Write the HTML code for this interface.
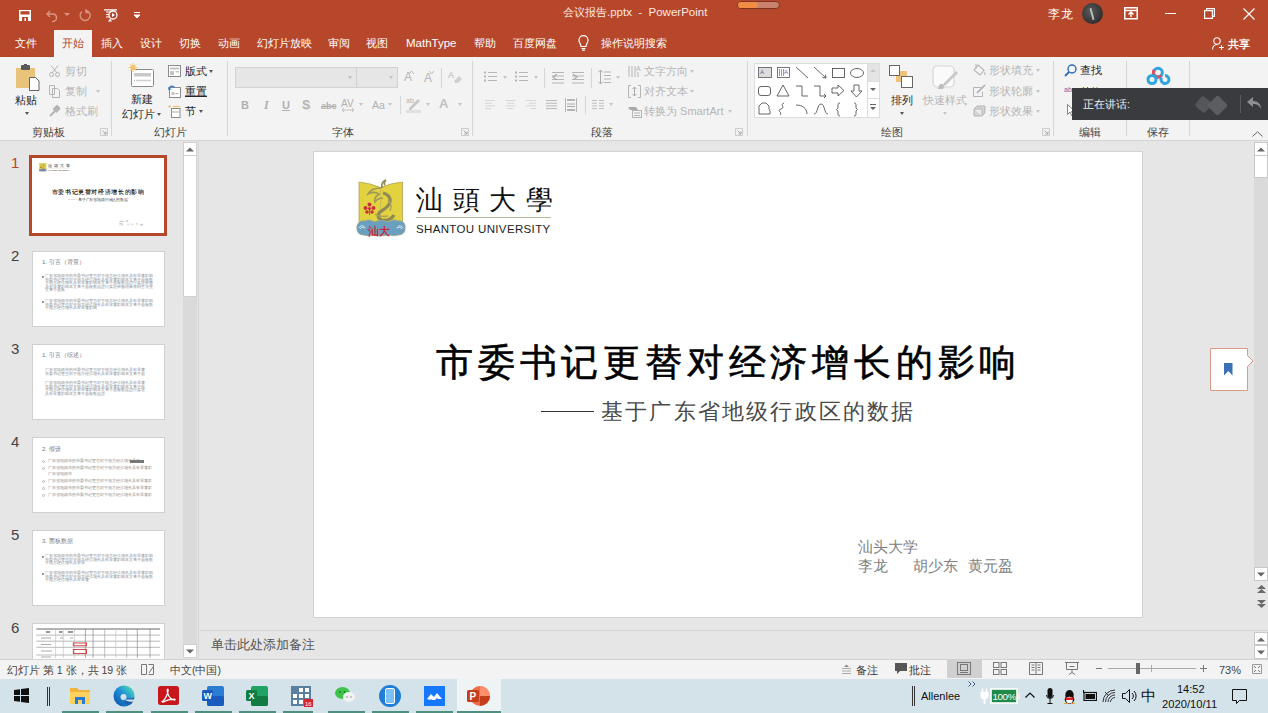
<!DOCTYPE html>
<html><head><meta charset="utf-8">
<style>
*{box-sizing:border-box;margin:0;padding:0}
html,body{width:1268px;height:713px;overflow:hidden;background:#e6e6e6;font-family:"Liberation Sans",sans-serif;}
.a{position:absolute;white-space:nowrap}
#title{left:0;top:0;width:1268px;height:30px;background:#b7472a}
#tabs{left:0;top:30px;width:1268px;height:27px;background:#b7472a}
#ribbon{left:0;top:57px;width:1268px;height:84px;background:#f3f3f3;border-bottom:1px solid #d5d5d5}
#left{left:0;top:141px;width:199px;height:518px;background:#e6e6e6;border-right:1px solid #d4d4d4}
#main{left:200px;top:141px;width:1068px;height:518px;background:#e6e6e6}
#slide{left:313px;top:151px;width:830px;height:467px;background:#fff;border:1px solid #d2d2d2}
#notes{left:200px;top:630px;width:1068px;height:29px;background:#e6e6e6;border-top:1px solid #d2d2d2}
#status{left:0;top:659px;width:1268px;height:20px;background:#f3f3f3;border-top:1px solid #d2d2d2}
#taskbar{left:0;top:679px;width:1268px;height:34px;background:#d4e2ea}
.w{color:#fff}
.tab{top:5px;font-size:10.5px;color:#fff;line-height:16px}
.thumb{position:absolute;background:#fff;border:1px solid #d0d0d0}
.num{position:absolute;font-size:15px;color:#444}
</style></head><body>
<div id="title" class="a">
 <svg class="a" style="left:19px;top:10px" width="12" height="11" viewBox="0 0 12 11"><path d="M0 0h12v11H0z" fill="#fff"/><path d="M1.5 1.2h9v3.3h-9z" fill="#b7472a"/><path d="M3 7h6v4H3z" fill="#b7472a"/><path d="M5.5 8h1.5v3H5.5z" fill="#fff"/></svg>
 <svg class="a" style="left:46px;top:9px" width="14" height="13" viewBox="0 0 14 13"><path d="M4 2 L1 5 L4 8 M1.5 5 H8 A4 4 0 0 1 8 12.5 H6" fill="none" stroke="#d99582" stroke-width="1.4"/></svg>
 <svg class="a" style="left:64px;top:13px" width="6" height="4"><path d="M0 0h6l-3 3z" fill="#d99582"/></svg>
 <svg class="a" style="left:79px;top:9px" width="12" height="13" viewBox="0 0 12 13"><path d="M7 1.5 A5 5 0 1 1 3 2.5 M7 0 V3.5 H10.5" fill="none" stroke="#d99582" stroke-width="1.4"/></svg>
 <svg class="a" style="left:104px;top:9px" width="15" height="13" viewBox="0 0 15 13"><path d="M0 0.8h13 M2 3h5 M2 5.5h3 M2 8h4" stroke="#fff" stroke-width="1.2"/><circle cx="9" cy="6" r="4" fill="none" stroke="#fff" stroke-width="1.3"/><path d="M8 4l3 2-3 2z" fill="#fff"/><path d="M4 12.5l2-3 2 3" fill="#fff"/></svg>
 <svg class="a" style="left:134px;top:12px" width="6" height="7"><path d="M0 0.5h6 M0 3h6l-3 3z" stroke="#fff" fill="#fff" stroke-width="1"/></svg>
 <div class="a w" style="left:563px;top:6px;font-size:11.5px;color:#fbe9e4"><span style="font-size:10.5px">会议报告</span>.pptx&nbsp; - &nbsp;PowerPoint</div>
 <div class="a" style="left:737px;top:1px;width:43px;height:8px;border-radius:4px;background:#c9806c;border:1.5px solid #7e3420"><div style="width:20px;height:100%;background:#f08c44;border-radius:3px"></div></div>
 <div class="a w" style="left:1048px;top:6px;font-size:12px;letter-spacing:1px">李龙</div>
 <div class="a" style="left:1082px;top:3px;width:21px;height:21px;border-radius:50%;background:radial-gradient(circle at 40% 40%,#5a5a5a,#1e1e1e)"><div style="position:absolute;left:9px;top:5px;width:2px;height:12px;background:#bbb;transform:rotate(-15deg)"></div></div>
 <svg class="a" style="left:1124px;top:7px" width="14" height="13" viewBox="0 0 14 13"><rect x="0.75" y="0.75" width="12.5" height="11" fill="none" stroke="#fff" stroke-width="1.5"/><path d="M0.5 3.5h13" stroke="#fff" stroke-width="1.5"/><path d="M7 10V5 M4.5 7.5L7 5l2.5 2.5" stroke="#fff" stroke-width="1.4" fill="none"/></svg>
 <div class="a" style="left:1165px;top:13px;width:11px;height:1.2px;background:#fff"></div>
 <svg class="a" style="left:1204px;top:8px" width="11" height="11" viewBox="0 0 11 11"><path d="M0.6 2.6h7.8v7.8h-7.8z M2.6 2.6V0.6h7.8v7.8H8.4" fill="none" stroke="#fff" stroke-width="1.2"/></svg>
 <svg class="a" style="left:1243px;top:8px" width="12" height="12" viewBox="0 0 12 12"><path d="M0.5 0.5L11.5 11.5 M11.5 0.5L0.5 11.5" stroke="#fff" stroke-width="1.2"/></svg>
</div>
<div id="tabs" class="a">
 <div class="a" style="left:54px;top:0;width:38px;height:28px;background:#f3f3f3"></div>
 <div class="a tab" style="left:15px">文件</div>
 <div class="a tab" style="left:62px;color:#b7472a">开始</div>
 <div class="a tab" style="left:101px">插入</div>
 <div class="a tab" style="left:140px">设计</div>
 <div class="a tab" style="left:179px">切换</div>
 <div class="a tab" style="left:218px">动画</div>
 <div class="a tab" style="left:257px">幻灯片放映</div>
 <div class="a tab" style="left:328px">审阅</div>
 <div class="a tab" style="left:366px">视图</div>
 <div class="a tab" style="left:406px;font-size:11.5px">MathType</div>
 <div class="a tab" style="left:474px">帮助</div>
 <div class="a tab" style="left:513px">百度网盘</div>
 <svg class="a" style="left:578px;top:5px" width="11" height="16" viewBox="0 0 11 16"><path d="M3 11.5 C3 9 1 8 1 5.2 A4.5 4.5 0 0 1 10 5.2 C10 8 8 9 8 11.5z M3.5 13.5h4 M4 15.2h3" fill="none" stroke="#fff" stroke-width="1.2"/></svg>
 <div class="a tab" style="left:601px">操作说明搜索</div>
 <svg class="a" style="left:1212px;top:7px" width="12" height="13" viewBox="0 0 12 13"><circle cx="5" cy="4" r="3.2" fill="none" stroke="#fff" stroke-width="1.1"/><path d="M0.5 12.5C0.5 9.5 2.5 7.5 5 7.5 M7 10.5h5 M9.5 8v5" fill="none" stroke="#fff" stroke-width="1.1"/></svg>
 <div class="a tab" style="left:1228px;top:6px;font-weight:bold">共享</div>
</div>
<div id="ribbon" class="a"></div>
<div id="ribc"><svg class="a" style="left:15px;top:64px" width="26" height="27" viewBox="0 0 26 27"><rect x="1" y="4" width="19" height="20" fill="#eac37a"/><rect x="6" y="1" width="9" height="5" rx="1" fill="#5a5a5a"/><rect x="9" y="0" width="3" height="2" fill="#5a5a5a"/><path d="M14.5 13.5h6l3.5 3.5v9.5h-9.5z" fill="#fff" stroke="#666" stroke-width="1"/></svg>
<div class="a" style="left:15px;top:93px;font-size:11px;line-height:14px;color:#262626;">粘贴</div>
<div class="a" style="left:25px;top:112px;width:0;height:0;border-left:2.5px solid transparent;border-right:2.5px solid transparent;border-top:3px solid #555"></div>
<svg class="a" style="left:49px;top:65px" width="11" height="12" viewBox="0 0 11 12"><path d="M2 0.5L8 8 M9 0.5L3 8" stroke="#b5b5b5" stroke-width="1"/><circle cx="2.5" cy="9.5" r="2" fill="none" stroke="#b5b5b5"/><circle cx="8.5" cy="9.5" r="2" fill="none" stroke="#b5b5b5"/></svg>
<div class="a" style="left:65px;top:64px;font-size:11px;line-height:14px;color:#b5b5b5;">剪切</div>
<svg class="a" style="left:49px;top:85px" width="11" height="13" viewBox="0 0 11 13"><path d="M0.5 0.5h5v9h-5z M3.5 3.5h5l2 2v7h-7z" fill="#f3f3f3" stroke="#b5b5b5" stroke-width="1"/></svg>
<div class="a" style="left:65px;top:84px;font-size:11px;line-height:14px;color:#b5b5b5;">复制</div>
<div class="a" style="left:96px;top:90px;width:0;height:0;border-left:2.5px solid transparent;border-right:2.5px solid transparent;border-top:3px solid #c5c5c5"></div>
<svg class="a" style="left:49px;top:105px" width="11" height="12" viewBox="0 0 11 12"><path d="M1 11L6 6 M5 4l3-3 2.5 2.5-3 3z" stroke="#b5b5b5" stroke-width="2" fill="#b5b5b5"/></svg>
<div class="a" style="left:65px;top:104px;font-size:11px;line-height:14px;color:#b5b5b5;">格式刷</div>
<div class="a" style="left:32px;top:125px;font-size:11px;line-height:14px;color:#444;">剪贴板</div>
<svg class="a" style="left:100px;top:128px" width="8" height="8" viewBox="0 0 8 8"><path d="M0.5 7.5V0.5H7.5V7.5z" fill="none" stroke="#c2c2c2" stroke-width="0.8"/><path d="M2.5 2.5L6 6 M6 3.5V6H3.5" fill="none" stroke="#a0a0a0" stroke-width="0.9"/></svg>
<div class="a" style="left:111px;top:61px;width:1px;height:75px;background:#d6d6d6"></div>
<svg class="a" style="left:128px;top:63px" width="27" height="24" viewBox="0 0 27 24"><rect x="3.5" y="6.5" width="22" height="17" rx="1" fill="#fff" stroke="#8a8a8a" stroke-width="1"/><rect x="6" y="10" width="17" height="3.5" fill="#c8c8c8"/><path d="M8 17.5h15" stroke="#cfcfcf" stroke-width="1.5"/><path d="M6 17.5h1" stroke="#aaa"/><circle cx="5" cy="4.5" r="2.5" fill="#f5c46a"/><path d="M5 0v9 M0.5 4.5h9 M1.8 1.3l6.4 6.4 M8.2 1.3l-6.4 6.4" stroke="#f5c46a" stroke-width="1"/></svg>
<div class="a" style="left:131px;top:92px;font-size:11px;line-height:14px;color:#262626;">新建</div>
<div class="a" style="left:122px;top:107px;font-size:11px;line-height:14px;color:#262626;">幻灯片</div>
<div class="a" style="left:157px;top:113px;width:0;height:0;border-left:2.5px solid transparent;border-right:2.5px solid transparent;border-top:3px solid #555"></div>
<svg class="a" style="left:168px;top:65px" width="13" height="12" viewBox="0 0 13 12"><rect x="0.5" y="0.5" width="12" height="11" fill="#fff" stroke="#8a8a8a" stroke-width="1"/><rect x="2" y="2.5" width="9" height="2" fill="#c4c4c4"/><rect x="2" y="6" width="4" height="4" fill="#c4c4c4"/><rect x="7.5" y="6" width="3.5" height="1.5" fill="#c4c4c4"/></svg>
<div class="a" style="left:185px;top:64px;font-size:11px;line-height:14px;color:#262626;">版式</div>
<div class="a" style="left:209px;top:70px;width:0;height:0;border-left:2.5px solid transparent;border-right:2.5px solid transparent;border-top:3px solid #555"></div>
<svg class="a" style="left:168px;top:85px" width="13" height="13" viewBox="0 0 13 13"><rect x="1.5" y="2.5" width="11" height="10" fill="#fff" stroke="#8a8a8a" stroke-width="1"/><rect x="3.5" y="7" width="3" height="3" fill="#c4c4c4"/><path d="M7.5 8.5h3" stroke="#aaa"/><path d="M0.8 4.5A3.2 3.2 0 0 1 6.5 2.5" fill="none" stroke="#3d7fc1" stroke-width="1.3"/><path d="M0 2.2l0.9 3.3 2.8-1.4z" fill="#3d7fc1"/></svg>
<div class="a" style="left:185px;top:84px;font-size:11px;line-height:14px;color:#262626;text-decoration:underline">重置</div>
<svg class="a" style="left:168px;top:105px" width="13" height="13" viewBox="0 0 13 13"><rect x="3.5" y="3.5" width="8.5" height="9" fill="#fff" stroke="#8a8a8a" stroke-width="1"/><path d="M3.5 7h8.5" stroke="#c4c4c4" stroke-width="1.5"/><path d="M0 1.5h3 M1.5 0v3" stroke="#f5c46a" stroke-width="1"/><path d="M5 1.5h7" stroke="#f5c46a" stroke-width="1.2"/></svg>
<div class="a" style="left:185px;top:104px;font-size:11px;line-height:14px;color:#262626;">节</div>
<div class="a" style="left:199px;top:110px;width:0;height:0;border-left:2.5px solid transparent;border-right:2.5px solid transparent;border-top:3px solid #555"></div>
<div class="a" style="left:154px;top:125px;font-size:11px;line-height:14px;color:#444;">幻灯片</div>
<div class="a" style="left:227px;top:61px;width:1px;height:75px;background:#d6d6d6"></div>
<div class="a" style="left:235px;top:67px;width:122px;height:21px;background:#e6e6e6;border:1px solid #d2d2d2"></div>
<div class="a" style="left:356px;top:67px;width:42px;height:21px;background:#e6e6e6;border:1px solid #d2d2d2"></div>
<div class="a" style="left:348px;top:76px;width:0;height:0;border-left:2.5px solid transparent;border-right:2.5px solid transparent;border-top:3px solid #c0c0c0"></div>
<div class="a" style="left:389px;top:76px;width:0;height:0;border-left:2.5px solid transparent;border-right:2.5px solid transparent;border-top:3px solid #c0c0c0"></div>
<div class="a" style="left:404px;top:70px;font-size:12px;line-height:14px;color:#b5b5b5;">A</div>
<svg class="a" style="left:409px;top:71px" width="5" height="3"><path d="M0 3L2.5 0 5 3" fill="none" stroke="#b5b5b5"/></svg>
<div class="a" style="left:424px;top:71px;font-size:12px;line-height:14px;color:#b5b5b5;">A</div>
<svg class="a" style="left:429px;top:71px" width="5" height="3"><path d="M0 0L2.5 3 5 0" fill="none" stroke="#b5b5b5"/></svg>
<div class="a" style="left:441px;top:68px;width:1px;height:20px;background:#d6d6d6"></div>
<svg class="a" style="left:448px;top:70px" width="14" height="14" viewBox="0 0 14 14"><text x="0" y="8" font-size="9" fill="#b5b5b5" font-family="Liberation Sans">A</text><path d="M6 11l5-5 3 3-4 4H7z" fill="#d0d0d0"/></svg>
<div class="a" style="left:241px;top:98px;font-size:11px;line-height:14px;color:#b0b0b0;font-weight:bold">B</div>
<div class="a" style="left:264px;top:98px;font-size:12px;line-height:14px;color:#b0b0b0;font-style:italic;font-weight:bold;font-family:Liberation Serif;">I</div>
<div class="a" style="left:282px;top:98px;font-size:11px;line-height:14px;color:#b0b0b0;font-weight:bold;text-decoration:underline">U</div>
<div class="a" style="left:302px;top:98px;font-size:12px;line-height:14px;color:#b5b5b5;font-weight:bold;text-shadow:1px 1px #ddd">S</div>
<div class="a" style="left:321px;top:99px;line-height:14px;color:#b0b0b0;text-decoration:line-through;font-size:9px;font-weight:bold">abc</div>
<div class="a" style="left:341px;top:97px;line-height:14px;color:#b0b0b0;font-size:10px">AV</div>
<div class="a" style="left:372px;top:98px;font-size:10.5px;line-height:14px;color:#b0b0b0;">Aa</div>
<svg class="a" style="left:342px;top:108px" width="12" height="4"><path d="M0 2h12 M0 2l2-2 M0 2l2 2 M12 2l-2-2 M12 2l-2 2" stroke="#b5b5b5" stroke-width="0.8"/></svg>
<div class="a" style="left:359px;top:103px;width:0;height:0;border-left:2.5px solid transparent;border-right:2.5px solid transparent;border-top:3px solid #c5c5c5"></div>
<div class="a" style="left:388px;top:103px;width:0;height:0;border-left:2.5px solid transparent;border-right:2.5px solid transparent;border-top:3px solid #c5c5c5"></div>
<div class="a" style="left:400px;top:96px;width:1px;height:18px;background:#d6d6d6"></div>
<svg class="a" style="left:406px;top:96px" width="15" height="17" viewBox="0 0 15 17"><text x="0" y="7" font-size="7" fill="#b5b5b5" font-family="Liberation Sans">ab</text><path d="M3 12L12 3l2 2-9 9H3z" fill="#c8c8c8"/><rect x="0" y="14" width="15" height="3" fill="#e0e0e0"/></svg>
<div class="a" style="left:426px;top:103px;width:0;height:0;border-left:2.5px solid transparent;border-right:2.5px solid transparent;border-top:3px solid #c5c5c5"></div>
<div class="a" style="left:439px;top:97px;font-size:13px;line-height:14px;color:#c0c0c0;font-weight:bold">A</div>
<div class="a" style="left:458px;top:103px;width:0;height:0;border-left:2.5px solid transparent;border-right:2.5px solid transparent;border-top:3px solid #c5c5c5"></div>
<div class="a" style="left:332px;top:125px;font-size:11px;line-height:14px;color:#444;">字体</div>
<svg class="a" style="left:461px;top:128px" width="8" height="8" viewBox="0 0 8 8"><path d="M0.5 7.5V0.5H7.5V7.5z" fill="none" stroke="#c2c2c2" stroke-width="0.8"/><path d="M2.5 2.5L6 6 M6 3.5V6H3.5" fill="none" stroke="#a0a0a0" stroke-width="0.9"/></svg>
<div class="a" style="left:472px;top:61px;width:1px;height:75px;background:#d6d6d6"></div>
<svg class="a" style="left:484px;top:71px" width="13" height="12"><rect x="0" y="0.5" width="2" height="2" fill="#b5b5b5"/><rect x="4" y="1" width="9" height="1" fill="#b5b5b5"/><rect x="0" y="4.5" width="2" height="2" fill="#b5b5b5"/><rect x="4" y="5" width="9" height="1" fill="#b5b5b5"/><rect x="0" y="8.5" width="2" height="2" fill="#b5b5b5"/><rect x="4" y="9" width="9" height="1" fill="#b5b5b5"/></svg>
<div class="a" style="left:503px;top:76px;width:0;height:0;border-left:2.5px solid transparent;border-right:2.5px solid transparent;border-top:3px solid #c5c5c5"></div>
<svg class="a" style="left:515px;top:71px" width="13" height="12"><rect x="0" y="0.5" width="2" height="2" fill="#b5b5b5"/><rect x="4" y="1" width="9" height="1" fill="#b5b5b5"/><rect x="0" y="4.5" width="2" height="2" fill="#b5b5b5"/><rect x="4" y="5" width="9" height="1" fill="#b5b5b5"/><rect x="0" y="8.5" width="2" height="2" fill="#b5b5b5"/><rect x="4" y="9" width="9" height="1" fill="#b5b5b5"/></svg>
<div class="a" style="left:534px;top:76px;width:0;height:0;border-left:2.5px solid transparent;border-right:2.5px solid transparent;border-top:3px solid #c5c5c5"></div>
<div class="a" style="left:544px;top:68px;width:1px;height:20px;background:#d6d6d6"></div>
<svg class="a" style="left:552px;top:71px" width="12" height="14.0"><rect x="0" y="1.0" width="12" height="1" fill="#b5b5b5"/><rect x="0" y="4.5" width="12" height="1" fill="#b5b5b5"/><rect x="0" y="8.0" width="12" height="1" fill="#b5b5b5"/><rect x="0" y="11.5" width="12" height="1" fill="#b5b5b5"/></svg>
<svg class="a" style="left:552px;top:74px" width="6" height="6"><path d="M5 0L1 3l4 3" fill="none" stroke="#aaa" stroke-width="1.2"/></svg>
<svg class="a" style="left:572px;top:71px" width="12" height="14.0"><rect x="0" y="1.0" width="12" height="1" fill="#b5b5b5"/><rect x="0" y="4.5" width="12" height="1" fill="#b5b5b5"/><rect x="0" y="8.0" width="12" height="1" fill="#b5b5b5"/><rect x="0" y="11.5" width="12" height="1" fill="#b5b5b5"/></svg>
<svg class="a" style="left:572px;top:74px" width="6" height="6"><path d="M1 0l4 3-4 3" fill="none" stroke="#aaa" stroke-width="1.2"/></svg>
<div class="a" style="left:591px;top:68px;width:1px;height:20px;background:#d6d6d6"></div>
<svg class="a" style="left:598px;top:70px" width="13" height="14" viewBox="0 0 13 14"><path d="M2.5 0v14 M0 2.5l2.5-2.5 2.5 2.5 M0 11.5l2.5 2.5 2.5-2.5" fill="none" stroke="#aaa" stroke-width="1"/><path d="M6 2h7 M6 5.5h7 M6 9h7 M6 12.5h7" stroke="#b5b5b5"/></svg>
<div class="a" style="left:616px;top:76px;width:0;height:0;border-left:2.5px solid transparent;border-right:2.5px solid transparent;border-top:3px solid #c5c5c5"></div>
<svg class="a" style="left:485px;top:100px" width="11" height="10"><path d="M0 0.5h10 M0 3.2h7 M0 5.9h10 M0 8.600000000000001h6 " stroke="#d6d6d6" stroke-width="1"/></svg>
<svg class="a" style="left:505px;top:100px" width="11" height="10"><path d="M0.5 0.5h10 M2.0 3.2h7 M0.5 5.9h10 M2.5 8.600000000000001h6 " stroke="#d6d6d6" stroke-width="1"/></svg>
<svg class="a" style="left:525px;top:100px" width="11" height="10"><path d="M1 0.5h10 M4 3.2h7 M1 5.9h10 M5 8.600000000000001h6 " stroke="#d6d6d6" stroke-width="1"/></svg>
<svg class="a" style="left:546px;top:100px" width="11" height="10"><path d="M0 0.5h11 M0 3.2h11 M0 5.9h11 M0 8.6h11" stroke="#b8b8b8" stroke-width="1"/></svg>
<svg class="a" style="left:565px;top:98px" width="12" height="14" viewBox="0 0 12 14"><path d="M0.5 0v14 M11.5 0v14" stroke="#b5b5b5"/><path d="M2 2h8 M2 12h8" stroke="#b5b5b5" stroke-width="2"/><path d="M2 6h8 M2 8.5h8" stroke="#aaa"/></svg>
<div class="a" style="left:585px;top:96px;width:1px;height:18px;background:#d6d6d6"></div>
<svg class="a" style="left:592px;top:100px" width="12" height="10"><path d="M0 0.5h5 M0 3.2h5 M0 5.9h5 M0 8.6h5 M7 0.5h5 M7 3.2h5 M7 5.9h5 M7 8.6h5" stroke="#c0c0c0" stroke-width="1"/></svg>
<div class="a" style="left:609px;top:103px;width:0;height:0;border-left:2.5px solid transparent;border-right:2.5px solid transparent;border-top:3px solid #c5c5c5"></div>
<svg class="a" style="left:628px;top:64px" width="13" height="14" viewBox="0 0 13 14"><path d="M1 2v11 M4 2v11 M7 2v11" stroke="#b5b5b5"/><text x="8" y="7" font-size="7" fill="#b5b5b5" font-family="Liberation Sans">A</text><path d="M10 8v5" stroke="#b5b5b5"/></svg>
<div class="a" style="left:644px;top:64px;font-size:11px;line-height:14px;color:#b5b5b5;">文字方向</div>
<div class="a" style="left:690px;top:70px;width:0;height:0;border-left:2.5px solid transparent;border-right:2.5px solid transparent;border-top:3px solid #c5c5c5"></div>
<svg class="a" style="left:628px;top:85px" width="13" height="13" viewBox="0 0 13 13"><path d="M3 0.5H0.5v12H3 M10 0.5h2.5v12H10" fill="none" stroke="#b5b5b5"/><path d="M6.5 2v9 M4.5 4l2-2 2 2 M4.5 9l2 2 2-2" fill="none" stroke="#aaa"/></svg>
<div class="a" style="left:644px;top:84px;font-size:11px;line-height:14px;color:#b5b5b5;">对齐文本</div>
<div class="a" style="left:690px;top:90px;width:0;height:0;border-left:2.5px solid transparent;border-right:2.5px solid transparent;border-top:3px solid #c5c5c5"></div>
<svg class="a" style="left:628px;top:105px" width="14" height="13" viewBox="0 0 14 13"><path d="M0 2h8l2 3H2z" fill="#aaa"/><rect x="4.5" y="5.5" width="9" height="7" fill="#f3f3f3" stroke="#b5b5b5"/><path d="M6 8h6 M6 10.5h6" stroke="#b5b5b5"/></svg>
<div class="a" style="left:644px;top:104px;font-size:11px;line-height:14px;color:#b5b5b5;">转换为 SmartArt</div>
<div class="a" style="left:728px;top:110px;width:0;height:0;border-left:2.5px solid transparent;border-right:2.5px solid transparent;border-top:3px solid #c5c5c5"></div>
<div class="a" style="left:591px;top:125px;font-size:11px;line-height:14px;color:#444;">段落</div>
<svg class="a" style="left:735px;top:128px" width="8" height="8" viewBox="0 0 8 8"><path d="M0.5 7.5V0.5H7.5V7.5z" fill="none" stroke="#c2c2c2" stroke-width="0.8"/><path d="M2.5 2.5L6 6 M6 3.5V6H3.5" fill="none" stroke="#a0a0a0" stroke-width="0.9"/></svg>
<div class="a" style="left:747px;top:61px;width:1px;height:75px;background:#d6d6d6"></div>
<div class="a" style="left:754px;top:63px;width:126px;height:55px;background:#fff;border:1px solid #dcdcdc"></div>
<div class="a" style="left:867px;top:64px;width:12px;height:17px;background:#e4e4e4;border-left:1px solid #dcdcdc"></div>
<div class="a" style="left:867px;top:81px;width:12px;height:36px;border-left:1px solid #dcdcdc;border-top:1px solid #dcdcdc"></div>
<div class="a" style="left:867px;top:98px;width:12px;height:1px;background:#dcdcdc"></div>
<svg class="a" style="left:870px;top:69px" width="6" height="3"><path d="M0 3L3 0 6 3z" fill="#c8c8c8"/></svg>
<svg class="a" style="left:870px;top:88px" width="6" height="4"><path d="M0 0h6L3 3z" fill="#666"/></svg>
<svg class="a" style="left:870px;top:104px" width="6" height="7"><path d="M0 0.5h6" stroke="#666"/><path d="M0 3h6L3 6z" fill="#666"/></svg>
<svg class="a" style="left:756px;top:64px" width="110" height="54" viewBox="0 0 110 54">
<rect x="2.5" y="3.5" width="13" height="10" fill="#ddd" stroke="#555" stroke-width="0.8"/><text x="4" y="10" font-size="6" fill="#3c6fb0" font-family="Liberation Sans">A</text>
<rect x="21.5" y="3.5" width="12" height="10" fill="none" stroke="#555" stroke-width="0.8"/><path d="M23.5 5v7 M25.5 5v7 M27.5 5v7" stroke="#555" stroke-width="0.6"/><text x="28" y="10" font-size="6" fill="#3c6fb0" font-family="Liberation Sans">A</text>
<path d="M40 3l12 11" stroke="#555" stroke-width="0.9"/>
<path d="M58 3l12 11 M70 14l-3.5-0.5 M70 14l-0.5-3.5" stroke="#555" stroke-width="0.9" fill="none"/>
<rect x="76.5" y="4.5" width="12" height="9" fill="none" stroke="#555" stroke-width="0.9"/>
<ellipse cx="101" cy="9" rx="6.5" ry="4.5" fill="none" stroke="#555" stroke-width="0.9"/>
<rect x="2.5" y="22.5" width="12" height="9" rx="2.5" fill="none" stroke="#555" stroke-width="0.9"/>
<path d="M27 21l-6 11h12z" fill="none" stroke="#555" stroke-width="0.9"/>
<path d="M40 22h6v10h6" fill="none" stroke="#555" stroke-width="0.9"/>
<path d="M58 22h6v10h6 M68 30l2 2-2 2" fill="none" stroke="#555" stroke-width="0.9"/>
<path d="M76 24h6v-3l6 5.5-6 5.5v-3h-6z" fill="none" stroke="#555" stroke-width="0.9"/>
<path d="M98 21h5v6h3l-5.5 6-5.5-6h3z" fill="none" stroke="#555" stroke-width="0.9"/>
<path d="M3 50h11c1-4-2-4-1-8l-3-3H6l-3 3z" fill="none" stroke="#555" stroke-width="0.9"/>
<path d="M28 39c-5 2 2 4-3 6s2 3-1 6" fill="none" stroke="#555" stroke-width="0.9"/>
<path d="M40 41c6 0 11 3 11 9" fill="none" stroke="#555" stroke-width="0.9"/>
<path d="M58 50c4 0 3-10 7-10s3 10 7 10" fill="none" stroke="#555" stroke-width="0.9"/>
<path d="M84 39c-2 0-2 1-2 3v2l-1.5 1.5 1.5 1.5v2c0 2 0 3 2 3" fill="none" stroke="#555" stroke-width="0.9"/>
<path d="M98 39c2 0 2 1 2 3v2l1.5 1.5-1.5 1.5v2c0 2 0 3-2 3" fill="none" stroke="#555" stroke-width="0.9"/>
</svg>
<svg class="a" style="left:889px;top:65px" width="24" height="23" viewBox="0 0 24 23"><rect x="7" y="6" width="11" height="11" fill="#efc27a"/><rect x="0.5" y="0.5" width="10" height="10" fill="#fff" stroke="#666"/><rect x="12.5" y="11.5" width="11" height="11" fill="#fff" stroke="#666"/></svg>
<div class="a" style="left:891px;top:93px;font-size:11px;line-height:14px;color:#262626;">排列</div>
<div class="a" style="left:900px;top:112px;width:0;height:0;border-left:2.5px solid transparent;border-right:2.5px solid transparent;border-top:3px solid #555"></div>
<svg class="a" style="left:932px;top:65px" width="27" height="25" viewBox="0 0 27 25"><rect x="1" y="1" width="21" height="21" rx="4" fill="#fafafa" stroke="#d6d6d6" stroke-width="1.2"/><path d="M26 8L13 21l-2-2L24 6z" fill="#c8c8c8"/><path d="M9 19c3 0 4 2 2 5H5c3-1 1-5 4-5z" fill="#bdbdbd"/></svg>
<div class="a" style="left:923px;top:93px;font-size:11px;line-height:14px;color:#b5b5b5;">快速样式</div>
<div class="a" style="left:943px;top:112px;width:0;height:0;border-left:2.5px solid transparent;border-right:2.5px solid transparent;border-top:3px solid #c5c5c5"></div>
<svg class="a" style="left:973px;top:64px" width="13" height="12" viewBox="0 0 13 12"><path d="M5 1l6 5-4 5-6-5z" fill="none" stroke="#b5b5b5" stroke-width="1.1"/><path d="M3 0v5" stroke="#b5b5b5"/><path d="M11 8c1 1 1.5 2 0.5 3" stroke="#ccc" stroke-width="1.5"/></svg>
<div class="a" style="left:989px;top:63px;font-size:11px;line-height:14px;color:#b5b5b5;">形状填充</div>
<div class="a" style="left:1036px;top:69px;width:0;height:0;border-left:2.5px solid transparent;border-right:2.5px solid transparent;border-top:3px solid #c5c5c5"></div>
<svg class="a" style="left:973px;top:84px" width="13" height="13" viewBox="0 0 13 13"><path d="M0.5 3.5h8 M0.5 3.5v9h9v-5" fill="none" stroke="#b5b5b5"/><path d="M4 9l8-8" stroke="#aaa" stroke-width="1.4"/></svg>
<div class="a" style="left:989px;top:84px;font-size:11px;line-height:14px;color:#b5b5b5;">形状轮廓</div>
<div class="a" style="left:1036px;top:90px;width:0;height:0;border-left:2.5px solid transparent;border-right:2.5px solid transparent;border-top:3px solid #c5c5c5"></div>
<svg class="a" style="left:973px;top:105px" width="13" height="12" viewBox="0 0 13 12"><path d="M4 1h8v7l-3 3H1V4z" fill="#d4d4d4" stroke="#b5b5b5"/><path d="M1 4h8v7" fill="#ececec" stroke="#b5b5b5"/></svg>
<div class="a" style="left:989px;top:104px;font-size:11px;line-height:14px;color:#b5b5b5;">形状效果</div>
<div class="a" style="left:1036px;top:110px;width:0;height:0;border-left:2.5px solid transparent;border-right:2.5px solid transparent;border-top:3px solid #c5c5c5"></div>
<div class="a" style="left:881px;top:125px;font-size:11px;line-height:14px;color:#444;">绘图</div>
<svg class="a" style="left:1042px;top:128px" width="8" height="8" viewBox="0 0 8 8"><path d="M0.5 7.5V0.5H7.5V7.5z" fill="none" stroke="#c2c2c2" stroke-width="0.8"/><path d="M2.5 2.5L6 6 M6 3.5V6H3.5" fill="none" stroke="#a0a0a0" stroke-width="0.9"/></svg>
<div class="a" style="left:1053px;top:61px;width:1px;height:75px;background:#d6d6d6"></div>
<svg class="a" style="left:1064px;top:64px" width="13" height="13" viewBox="0 0 13 13"><circle cx="8" cy="5" r="4" fill="none" stroke="#2b6cb8" stroke-width="1.4"/><path d="M5 8L1 12" stroke="#2b6cb8" stroke-width="1.8"/></svg>
<div class="a" style="left:1080px;top:63px;font-size:11px;line-height:14px;color:#262626;">查找</div>
<div class="a" style="left:1064px;top:86px;font-size:7px;line-height:7px;color:#7f5aa2">ab</div>
<div class="a" style="left:1080px;top:85px;font-size:11px;line-height:14px;color:#262626">替换</div>
<svg class="a" style="left:1067px;top:104px" width="8" height="12" viewBox="0 0 8 12"><path d="M0.5 0.5v10l2.5-2.5 2 4 1.5-0.8-2-3.7h3.5z" fill="#fff" stroke="#666" stroke-width="0.8"/></svg>
<div class="a" style="left:1079px;top:125px;font-size:11px;line-height:14px;color:#444;">编辑</div>
<div class="a" style="left:1126px;top:61px;width:1px;height:75px;background:#d6d6d6"></div>
<svg class="a" style="left:1146px;top:66px" width="25" height="20" viewBox="0 0 25 20"><circle cx="12" cy="6.5" r="4.3" fill="none" stroke="#2ea5e0" stroke-width="3"/><path d="M15.5 9.5A4.3 4.3 0 0 1 8.2 4" fill="none" stroke="#e84a5f" stroke-width="3"/><circle cx="6" cy="13.5" r="4" fill="none" stroke="#2ea5e0" stroke-width="3"/><path d="M15.5 11.5A4 4 0 1 0 19 9.5" fill="none" stroke="#2ea5e0" stroke-width="3"/></svg>
<div class="a" style="left:1147px;top:125px;font-size:11px;line-height:14px;color:#444;">保存</div>
<div class="a" style="left:1189px;top:61px;width:1px;height:75px;background:#d6d6d6"></div>
<svg class="a" style="left:1252px;top:131px" width="11" height="6"><path d="M0.5 5.5L5.5 0.8 10.5 5.5" fill="none" stroke="#666" stroke-width="1"/></svg>
<div class="a" style="left:1072px;top:88px;width:196px;height:32px;background:#3a3b3f"></div>
<div class="a" style="left:1083px;top:97px;font-size:10.5px;line-height:14px;color:#f0f0f0;">正在讲话:</div>
<svg class="a" style="left:1193px;top:93px" width="42" height="23" viewBox="0 0 42 23"><rect x="4" y="5" width="13" height="13" rx="2.5" transform="rotate(40 10.5 11.5)" fill="#55565a"/><rect x="17" y="5" width="15" height="15" rx="2.5" transform="rotate(45 24.5 12.5)" fill="#5c5d61"/></svg>
<div class="a" style="left:1240px;top:95px;width:1px;height:18px;background:#5a5b5e"></div>
<svg class="a" style="left:1247px;top:97px" width="14" height="12" viewBox="0 0 14 12"><path d="M6 0L0 5l6 5V7c4 0 6 1 8 5 0-5-3-8-8-8z" fill="#8e8f92"/></svg></div>
<div id="left" class="a"></div>
<div id="main" class="a"></div>
<div class="a" style="left:183px;top:142px;width:14px;height:516px;background:#dadada"></div>
<div class="a" style="left:183px;top:142px;width:14px;height:14px;background:#fff;border:1px solid #d0d0d0"></div>
<svg class="a" style="left:186px;top:147px" width="8" height="5"><path d="M0 4.5L4 0.5 8 4.5z" fill="#666"/></svg>
<div class="a" style="left:183px;top:156px;width:14px;height:141px;background:#fff;border:1px solid #d0d0d0;border-top:none"></div>
<div class="a" style="left:183px;top:644px;width:14px;height:14px;background:#fff;border:1px solid #d0d0d0"></div>
<svg class="a" style="left:186px;top:649px" width="8" height="5"><path d="M0 0.5L4 4.5 8 0.5z" fill="#666"/></svg>
<div class="a" style="left:29px;top:155px;width:138px;height:81px;border:3px solid #b7472a;background:#fff"></div>
<div class="num a" style="left:11px;top:154px;color:#b7472a">1</div>
<div class="thumb" style="left:32px;top:251px;width:133px;height:76px"></div>
<div class="num a" style="left:11px;top:247px">2</div>
<div class="thumb" style="left:32px;top:344px;width:133px;height:76px"></div>
<div class="num a" style="left:11px;top:340px">3</div>
<div class="thumb" style="left:32px;top:437px;width:133px;height:76px"></div>
<div class="num a" style="left:11px;top:433px">4</div>
<div class="thumb" style="left:32px;top:530px;width:133px;height:76px"></div>
<div class="num a" style="left:11px;top:526px">5</div>
<div class="thumb" style="left:32px;top:623px;width:133px;height:76px"></div>
<div class="num a" style="left:11px;top:619px">6</div>
<div class="a" style="left:45px;top:275.0px;font-size:3.7px;line-height:3.6px;color:#8c8c8c;">广东省地级市的市委书记更替对于地方经济增长具有显著影响</div><div class="a" style="left:45px;top:278.6px;font-size:3.7px;line-height:3.6px;color:#8c8c8c;">市委书记更替对于地方经济增长具有显著影响本文基于面板数</div><div class="a" style="left:45px;top:282.2px;font-size:3.7px;line-height:3.6px;color:#8c8c8c;">于地方经济增长具有显著影响本文基于面板数据进行实证检验</div><div class="a" style="left:45px;top:285.8px;font-size:3.7px;line-height:3.6px;color:#8c8c8c;">具有显著影响本文基于面板数据进行实证检验结果表明官员变</div><div class="a" style="left:45px;top:289.4px;font-size:3.7px;line-height:3.6px;color:#8c8c8c;">文基于面板</div>
<div class="a" style="left:42px;top:276px;width:1.5px;height:1.5px;background:#999"></div>
<div class="a" style="left:45px;top:300.0px;font-size:3.7px;line-height:3.6px;color:#8c8c8c;">广东省地级市的市委书记更替对于地方经济增长具有显著影响</div><div class="a" style="left:45px;top:303.6px;font-size:3.7px;line-height:3.6px;color:#8c8c8c;">市委书记更替对于地方经济增长具有显著影响本文基于面板数</div><div class="a" style="left:45px;top:307.2px;font-size:3.7px;line-height:3.6px;color:#8c8c8c;">于地方经济增长具有显著影响</div>
<div class="a" style="left:42px;top:301px;width:1.5px;height:1.5px;background:#999"></div>
<div class="a" style="left:45px;top:369.0px;font-size:3.7px;line-height:3.6px;color:#8c8c8c;">广东省地级市的市委书记更替对于地方经济增长具有显著</div><div class="a" style="left:45px;top:372.6px;font-size:3.7px;line-height:3.6px;color:#8c8c8c;">市委书记更替对于地方经济增长具有显著影响本文基于面</div>
<div class="a" style="left:45px;top:382.0px;font-size:3.7px;line-height:3.6px;color:#8c8c8c;">广东省地级市的市委书记更替对于地方经济增长具有显著</div><div class="a" style="left:45px;top:385.6px;font-size:3.7px;line-height:3.6px;color:#8c8c8c;">市委书记更替对于地方经济增长具有显著影响本文基于面</div><div class="a" style="left:45px;top:389.2px;font-size:3.7px;line-height:3.6px;color:#8c8c8c;">于地方经济增长具有显著影响本文基于面板数据进行实证</div><div class="a" style="left:45px;top:392.8px;font-size:3.7px;line-height:3.6px;color:#8c8c8c;">具有显著影响本文基于面板数据进</div>
<div class="a" style="left:48px;top:460.0px;font-size:3.7px;line-height:3.6px;color:#8c8c8c;">广东省地级市的市委书记更替对于地方经济增长具有</div>
<div class="a" style="left:42px;top:460px;width:3px;height:3px;border:0.6px solid #bbb;border-radius:50%"></div>
<div class="a" style="left:48px;top:467.0px;font-size:3.7px;line-height:3.6px;color:#8c8c8c;">广东省地级市的市委书记更替对于地方经济增长具有显著影</div>
<div class="a" style="left:42px;top:467px;width:3px;height:3px;border:0.6px solid #bbb;border-radius:50%"></div>
<div class="a" style="left:48px;top:473.0px;font-size:3.7px;line-height:3.6px;color:#8c8c8c;">广东省地级市</div>
<div class="a" style="left:48px;top:480.0px;font-size:3.7px;line-height:3.6px;color:#8c8c8c;">广东省地级市的市委书记更替对于地方经济增长具有显著影</div>
<div class="a" style="left:42px;top:480px;width:3px;height:3px;border:0.6px solid #bbb;border-radius:50%"></div>
<div class="a" style="left:48px;top:487.0px;font-size:3.7px;line-height:3.6px;color:#8c8c8c;">广东省地级市的市委书记更替对于地方经济增长具有显著影</div>
<div class="a" style="left:42px;top:487px;width:3px;height:3px;border:0.6px solid #bbb;border-radius:50%"></div>
<div class="a" style="left:48px;top:494.0px;font-size:3.7px;line-height:3.6px;color:#8c8c8c;">广东省地级市的市委书记更替对于地方经济增长具有显著影</div>
<div class="a" style="left:42px;top:494px;width:3px;height:3px;border:0.6px solid #bbb;border-radius:50%"></div>
<div class="a" style="left:130px;top:460px;width:14px;height:3px;background:#777"></div>
<div class="a" style="left:45px;top:555.0px;font-size:3.7px;line-height:3.6px;color:#8c8c8c;">广东省地级市的市委书记更替对于地方经济增长具有显著影响</div><div class="a" style="left:45px;top:558.6px;font-size:3.7px;line-height:3.6px;color:#8c8c8c;">市委书记更替对于地方经济增长具有显著影响本文基于面板数</div><div class="a" style="left:45px;top:562.2px;font-size:3.7px;line-height:3.6px;color:#8c8c8c;">于地方经济增长具有显</div>
<div class="a" style="left:45px;top:572.0px;font-size:3.7px;line-height:3.6px;color:#8c8c8c;">广东省地级市的市委书记更替对于地方经济增长具有显著影响</div><div class="a" style="left:45px;top:575.6px;font-size:3.7px;line-height:3.6px;color:#8c8c8c;">市委书记更替对于地方经济增长具有显著影响本文基于面板数</div><div class="a" style="left:45px;top:579.2px;font-size:3.7px;line-height:3.6px;color:#8c8c8c;">于地方经济增长具有显著</div>
<div class="a" style="left:42px;top:556px;width:1.5px;height:1.5px;background:#999"></div><div class="a" style="left:42px;top:573px;width:1.5px;height:1.5px;background:#999"></div>
<div class="a" style="left:32px;top:158px;width:132px;height:75px;overflow:hidden;background:#fff"><div style="position:absolute;left:0;top:0;width:1268px;height:713px;transform-origin:0 0;transform:scale(0.15904) translate(-313px,-151px)"><svg class="a" style="left:355px;top:179px" width="52" height="62" viewBox="0 0 52 62">
<path d="M4 3 Q15 4 25.5 8.5 Q36 4 47.5 3 L47.5 44 L4 44 Z" fill="#e3d23f" stroke="#a69a45" stroke-width="0.7"/>
<path d="M25.5 8.5 V42" stroke="#c1b454" stroke-width="0.7"/>
<path d="M27 9c-1-4 1-7 4-8-2 2-2 4-1 5" fill="none" stroke="#8f8a55" stroke-width="1.8"/>
<path d="M26 9c-6 0-11 2-13 6 4-2 8-2 11 0-3 2-5 5-4 8 2-3 5-4 8-4" fill="none" stroke="#9d975a" stroke-width="1.6"/>
<path d="M28 14c5 1 8 5 7 9-1 5-6 7-10 10-3 3-2 7 2 8 5 1 10-1 12-5" fill="none" stroke="#8f8a55" stroke-width="3.2"/>
<path d="M33 21c3 3 4 7 2 11 M20 35c3 2 8 3 13 2" fill="none" stroke="#a9a25f" stroke-width="1.4"/>
<g fill="#c8313a"><circle cx="14.5" cy="25.5" r="2"/><circle cx="10.5" cy="29" r="2"/><circle cx="18.5" cy="29" r="2"/><circle cx="12" cy="33" r="1.8"/><circle cx="17" cy="33" r="1.8"/><circle cx="14.5" cy="29.5" r="1.6"/></g>
<path d="M14.5 30v6" stroke="#c8313a" stroke-width="0.8"/>
<path d="M2 50c-1-5 3-9 8-8 3-2 7-1 9 1 4-2 10-2 14 0 3-2 7-3 10-1 5-1 8 3 7 8 0 4-3 6-7 6-3 1-6 1-8 0-5 1-12 1-18 0-2 1-6 1-8 0-4 0-7-2-7-6z" fill="#6b9fc0" stroke="#9fa88c" stroke-width="0.8"/>
<path d="M4 49c1-3 5-3 6 0-2-1-4-1-5 1 M48 49c-1-3-5-3-6 0 2-1 4-1 5 1" fill="none" stroke="#dfe9ee" stroke-width="0.9"/>
<text x="13" y="56" font-size="10.5" font-weight="bold" fill="#c72e3b" font-family="Liberation Serif" letter-spacing="-0.5">汕大</text>
</svg>
<div class="a" style="left:416px;top:182px;font-size:27px;line-height:36px;color:#111;letter-spacing:9.5px;font-family:Liberation Serif,serif">汕頭大學</div>
<div class="a" style="left:416px;top:217px;width:135px;height:1px;background:#b9b99a"></div>
<div class="a" style="left:416px;top:222px;font-size:11.5px;line-height:14px;color:#222;letter-spacing:0.35px">SHANTOU UNIVERSITY</div>
<div class="a" style="left:436px;top:340px;font-size:37px;line-height:46px;color:#000;font-weight:normal;letter-spacing:4.8px;-webkit-text-stroke:0.6px #000;font-family:Liberation Serif,serif">市委书记更替对经济增长的影响</div>
<div class="a" style="left:541px;top:411px;width:53px;height:1.3px;background:#333"></div>
<div class="a" style="left:601px;top:398px;font-size:22px;line-height:28px;color:#4a4a4a;font-weight:normal;letter-spacing:2.2px">基于广东省地级行政区的数据</div>
<div class="a" style="left:858px;top:537px;font-size:15px;line-height:19px;color:#808080">汕头大学</div>
<div class="a" style="left:858px;top:556px;font-size:15px;line-height:19px;color:#808080">李龙</div><div class="a" style="left:913px;top:556px;font-size:15px;line-height:19px;color:#808080">胡少东</div><div class="a" style="left:968px;top:556px;font-size:15px;line-height:19px;color:#808080">黄元盈</div>
</div></div>
<div class="a" style="left:42px;top:259px;font-size:6px;line-height:7px;color:#777">1. 引言（背景）</div>


<div class="a" style="left:42px;top:352px;font-size:6px;line-height:7px;color:#777">1. 引言（综述）</div>
<div class="a" style="left:42px;top:446px;font-size:6px;line-height:7px;color:#777">2. 假设</div>

<div class="a" style="left:42px;top:538px;font-size:6px;line-height:7px;color:#777">3. 面板数据</div>
<svg class="a" style="left:33px;top:624px" width="131" height="34" viewBox="0 0 131 34"><path d="M3.3 5H127" stroke="#555" stroke-width="0.9"/><path d="M3.3 11.1H127" stroke="#8a8a8a" stroke-width="0.6"/><path d="M3.3 17.2H127" stroke="#8a8a8a" stroke-width="0.6"/><path d="M3.3 23.3H127" stroke="#8a8a8a" stroke-width="0.6"/><path d="M3.3 31H127" stroke="#8a8a8a" stroke-width="0.6"/><path d="M22.6 5V34" stroke="#bbb" stroke-width="0.6"/><path d="M30.3 5V34" stroke="#bbb" stroke-width="0.6"/><path d="M41.4 5V34" stroke="#bbb" stroke-width="0.6"/><path d="M52.4 5V34" stroke="#777" stroke-width="0.6"/><path d="M60.1 5V34" stroke="#777" stroke-width="0.6"/><path d="M71.7 5V34" stroke="#999" stroke-width="0.6"/><path d="M82.8 5V34" stroke="#bbb" stroke-width="0.6"/><path d="M93.8 5V34" stroke="#999" stroke-width="0.6"/><path d="M104.3 5V34" stroke="#777" stroke-width="0.6"/><path d="M117 5V34" stroke="#777" stroke-width="0.6"/><rect x="40.3" y="19" width="13.2" height="2.8" fill="none" stroke="#c33" stroke-width="0.9"/><rect x="40.3" y="25.5" width="13.2" height="4.1" fill="none" stroke="#c33" stroke-width="0.9"/><path d="M13 8h4 M26 8h3.5 M35 8h5" stroke="#333" stroke-width="1.2"/><path d="M8 14h10 M8 20.5h10 M8 27h11 M8 33h10 M27 14h3 M37 14h3" stroke="#aaa" stroke-width="1"/></svg>
<div id="slide" class="a"></div>
<div id="slidec"><svg class="a" style="left:355px;top:179px" width="52" height="62" viewBox="0 0 52 62">
<path d="M4 3 Q15 4 25.5 8.5 Q36 4 47.5 3 L47.5 44 L4 44 Z" fill="#e3d23f" stroke="#a69a45" stroke-width="0.7"/>
<path d="M25.5 8.5 V42" stroke="#c1b454" stroke-width="0.7"/>
<path d="M27 9c-1-4 1-7 4-8-2 2-2 4-1 5" fill="none" stroke="#8f8a55" stroke-width="1.8"/>
<path d="M26 9c-6 0-11 2-13 6 4-2 8-2 11 0-3 2-5 5-4 8 2-3 5-4 8-4" fill="none" stroke="#9d975a" stroke-width="1.6"/>
<path d="M28 14c5 1 8 5 7 9-1 5-6 7-10 10-3 3-2 7 2 8 5 1 10-1 12-5" fill="none" stroke="#8f8a55" stroke-width="3.2"/>
<path d="M33 21c3 3 4 7 2 11 M20 35c3 2 8 3 13 2" fill="none" stroke="#a9a25f" stroke-width="1.4"/>
<g fill="#c8313a"><circle cx="14.5" cy="25.5" r="2"/><circle cx="10.5" cy="29" r="2"/><circle cx="18.5" cy="29" r="2"/><circle cx="12" cy="33" r="1.8"/><circle cx="17" cy="33" r="1.8"/><circle cx="14.5" cy="29.5" r="1.6"/></g>
<path d="M14.5 30v6" stroke="#c8313a" stroke-width="0.8"/>
<path d="M2 50c-1-5 3-9 8-8 3-2 7-1 9 1 4-2 10-2 14 0 3-2 7-3 10-1 5-1 8 3 7 8 0 4-3 6-7 6-3 1-6 1-8 0-5 1-12 1-18 0-2 1-6 1-8 0-4 0-7-2-7-6z" fill="#6b9fc0" stroke="#9fa88c" stroke-width="0.8"/>
<path d="M4 49c1-3 5-3 6 0-2-1-4-1-5 1 M48 49c-1-3-5-3-6 0 2-1 4-1 5 1" fill="none" stroke="#dfe9ee" stroke-width="0.9"/>
<text x="13" y="56" font-size="10.5" font-weight="bold" fill="#c72e3b" font-family="Liberation Serif" letter-spacing="-0.5">汕大</text>
</svg>
<div class="a" style="left:416px;top:182px;font-size:27px;line-height:36px;color:#111;letter-spacing:9.5px;font-family:Liberation Serif,serif">汕頭大學</div>
<div class="a" style="left:416px;top:217px;width:135px;height:1px;background:#b9b99a"></div>
<div class="a" style="left:416px;top:222px;font-size:11.5px;line-height:14px;color:#222;letter-spacing:0.35px">SHANTOU UNIVERSITY</div>
<div class="a" style="left:436px;top:340px;font-size:37px;line-height:46px;color:#000;font-weight:normal;letter-spacing:4.8px;-webkit-text-stroke:0.6px #000;font-family:Liberation Serif,serif">市委书记更替对经济增长的影响</div>
<div class="a" style="left:541px;top:411px;width:53px;height:1.3px;background:#333"></div>
<div class="a" style="left:601px;top:398px;font-size:22px;line-height:28px;color:#4a4a4a;font-weight:normal;letter-spacing:2.2px">基于广东省地级行政区的数据</div>
<div class="a" style="left:858px;top:537px;font-size:15px;line-height:19px;color:#808080">汕头大学</div>
<div class="a" style="left:858px;top:556px;font-size:15px;line-height:19px;color:#808080">李龙</div><div class="a" style="left:913px;top:556px;font-size:15px;line-height:19px;color:#808080">胡少东</div><div class="a" style="left:968px;top:556px;font-size:15px;line-height:19px;color:#808080">黄元盈</div>
</div><!--endslide-->
<div class="a" style="left:1254px;top:142px;width:14px;height:488px;background:#dadada"></div>
<div class="a" style="left:1254px;top:142px;width:14px;height:14px;background:#fff;border:1px solid #c8c8c8"></div>
<svg class="a" style="left:1257px;top:147px" width="8" height="5"><path d="M0 4.5L4 0.5 8 4.5z" fill="#666"/></svg>
<div class="a" style="left:1254px;top:156px;width:14px;height:22px;background:#fff;border:1px solid #c8c8c8;border-top:none"></div>
<div class="a" style="left:1254px;top:567px;width:14px;height:14px;background:#fff;border:1px solid #c8c8c8"></div>
<svg class="a" style="left:1257px;top:572px" width="8" height="5"><path d="M0 0.5L4 4.5 8 0.5z" fill="#666"/></svg>
<div class="a" style="left:1254px;top:581px;width:14px;height:49px;background:#e6e6e6"></div>
<svg class="a" style="left:1257px;top:585px" width="9" height="8" viewBox="0 0 9 8"><path d="M0 4L4.5 0 9 4z M0 8L4.5 4 9 8z" fill="#6a6a6a"/></svg>
<svg class="a" style="left:1257px;top:600px" width="9" height="8" viewBox="0 0 9 8"><path d="M0 0L4.5 4 9 0z M0 4L4.5 8 9 4z" fill="#6a6a6a"/></svg>
<svg class="a" style="left:1210px;top:348px" width="45" height="44" viewBox="0 0 45 44"><path d="M0.5 0.5H37.5V7.5L43 13 37.5 18.5V42.5H0.5Z" fill="#fff" stroke="#d99a86" stroke-width="1"/><path d="M14 15h8.5v12.5l-4.25-4.5-4.25 4.5z" fill="#3a72b5"/></svg>
<div id="notes" class="a"></div>
<div class="a" style="left:211px;top:637px;font-size:12.5px;line-height:17px;color:#555">单击此处添加备注</div>

<div class="a" style="left:1254px;top:632px;width:14px;height:13px;background:#fff;border:1px solid #c8c8c8"></div>
<svg class="a" style="left:1257px;top:637px" width="8" height="5"><path d="M0 4.5L4 0.5 8 4.5z" fill="#666"/></svg>
<div class="a" style="left:1254px;top:645px;width:14px;height:14px;background:#fff;border:1px solid #c8c8c8"></div>
<svg class="a" style="left:1257px;top:650px" width="8" height="5"><path d="M0 0.5L4 4.5 8 0.5z" fill="#666"/></svg>
<div id="status" class="a"></div>
<div class="a" style="left:7px;top:663px;font-size:10.5px;line-height:14px;color:#444">幻灯片 第 1 张，共 19 张</div>
<svg class="a" style="left:141px;top:664px" width="13" height="11" viewBox="0 0 13 11"><path d="M0.5 0.5h5v10h-5z" fill="none" stroke="#777"/><path d="M7.5 0.5h5v10h-5" fill="none" stroke="#777"/><path d="M8 9l4-6" stroke="#777"/></svg>
<div class="a" style="left:170px;top:663px;font-size:10.5px;line-height:14px;color:#444">中文(中国)</div>
<svg class="a" style="left:842px;top:664px" width="9" height="10" viewBox="0 0 9 10"><path d="M0 9.5h9 M0 7h9 M0 4.5h9" stroke="#aaa"/><path d="M2 3L4.5 0.5 7 3z" fill="#888"/></svg>
<div class="a" style="left:856px;top:663px;font-size:10.5px;line-height:14px;color:#333">备注</div>
<svg class="a" style="left:895px;top:663px" width="12" height="11" viewBox="0 0 12 11"><path d="M0 0h12v8H5l-3 3V8H0z" fill="#555"/></svg>
<div class="a" style="left:909px;top:663px;font-size:10.5px;line-height:14px;color:#333">批注</div>
<div class="a" style="left:947px;top:659px;width:35px;height:19px;background:#d0d0d0"></div>
<svg class="a" style="left:957px;top:662px" width="14" height="13" viewBox="0 0 14 13"><rect x="0.5" y="0.5" width="13" height="12" fill="none" stroke="#777"/><rect x="3.5" y="2.5" width="7" height="6" fill="none" stroke="#777"/><path d="M3 10.5h8" stroke="#777"/></svg>
<svg class="a" style="left:993px;top:662px" width="14" height="13" viewBox="0 0 14 13"><rect x="0.5" y="0.5" width="5.5" height="5" fill="none" stroke="#777"/><rect x="8" y="0.5" width="5.5" height="5" fill="none" stroke="#777"/><rect x="0.5" y="7.5" width="5.5" height="5" fill="none" stroke="#777"/><rect x="8" y="7.5" width="5.5" height="5" fill="none" stroke="#777"/></svg>
<svg class="a" style="left:1029px;top:662px" width="14" height="13" viewBox="0 0 14 13"><path d="M0.5 0.5h13v12h-13z M7 0.5v12 M2.5 3h3 M2.5 5.5h3 M2.5 8h3 M8.5 3h3 M8.5 5.5h3 M8.5 8h3" fill="none" stroke="#777"/></svg>
<svg class="a" style="left:1065px;top:662px" width="14" height="13" viewBox="0 0 14 13"><path d="M0 0.5h14 M1.5 0.5v7h11v-7 M7 7.5v3 M4 12.5l3-2 3 2 M4.5 4.5h5" fill="none" stroke="#777"/></svg>
<div class="a" style="left:1096px;top:668px;width:6px;height:1px;background:#777"></div>
<div class="a" style="left:1108px;top:668px;width:88px;height:1px;background:#aaa"></div>
<div class="a" style="left:1151px;top:665px;width:1px;height:7px;background:#aaa"></div>
<div class="a" style="left:1136px;top:663px;width:4px;height:11px;background:#666"></div>
<div class="a" style="left:1200px;top:668px;width:7px;height:1px;background:#777"></div><div class="a" style="left:1203px;top:665px;width:1px;height:7px;background:#777"></div>
<div class="a" style="left:1219px;top:663px;font-size:11px;line-height:14px;color:#444">73%</div>
<svg class="a" style="left:1252px;top:664px" width="10" height="10" viewBox="0 0 10 10"><path d="M0.5 0.5h9v9h-9z" fill="none" stroke="#999"/><path d="M2 2l2 2 M8 2L6 4 M2 8l2-2 M8 8L6 6" stroke="#777"/></svg>
<div id="taskbar" class="a"></div>
<svg class="a" style="left:14px;top:688px" width="15" height="15" viewBox="0 0 15 15"><path d="M0 2l6-0.8V7H0z M7 1L15 0v7H7z M0 8h6v5.8L0 13z M7 8h8v7l-8-1.1z" fill="#111"/></svg>
<div class="a" style="left:47px;top:687px;width:1px;height:19px;background:#333"></div><div class="a" style="left:49px;top:687px;width:1px;height:19px;background:#333"></div>
<div class="a" style="left:62px;top:711px;width:37px;height:2px;background:#4e8f80"></div>
<div class="a" style="left:106px;top:711px;width:37px;height:2px;background:#4e8f80"></div>
<div class="a" style="left:151px;top:711px;width:37px;height:2px;background:#4e8f80"></div>
<div class="a" style="left:195px;top:711px;width:37px;height:2px;background:#4e8f80"></div>
<div class="a" style="left:239px;top:711px;width:37px;height:2px;background:#4e8f80"></div>
<div class="a" style="left:283px;top:711px;width:30px;height:2px;background:#4e8f80"></div>
<div class="a" style="left:328px;top:711px;width:37px;height:2px;background:#4e8f80"></div>
<div class="a" style="left:372px;top:711px;width:37px;height:2px;background:#4e8f80"></div>
<div class="a" style="left:416px;top:711px;width:37px;height:2px;background:#4e8f80"></div>
<div class="a" style="left:457px;top:679px;width:44px;height:34px;background:#eef3f6"></div>
<div class="a" style="left:457px;top:711px;width:44px;height:2px;background:#4e8f80"></div>
<svg class="a" style="left:70px;top:687px" width="20" height="17" viewBox="0 0 20 17"><path d="M0 1h7l2 2h11v14H0z" fill="#f0b43c"/><path d="M0 5h20v12H0z" fill="#ffd25f"/><path d="M5 10h10v7h-3v-4H8v4H5z" fill="#2b7bd3"/></svg>
<svg class="a" style="left:113px;top:685px" width="23" height="22" viewBox="0 0 23 22"><defs><linearGradient id="eg" x1="0" y1="1" x2="1" y2="0"><stop offset="0" stop-color="#0b4fa0"/><stop offset="0.5" stop-color="#1e8ad8"/><stop offset="0.8" stop-color="#3fc6c0"/><stop offset="1" stop-color="#69d84f"/></linearGradient></defs><circle cx="11" cy="11" r="10.5" fill="url(#eg)"/><path d="M13 13.5c3 0 6 0 8.5-1-0.5 3-2 5.5-4 7-2 0.5-5 0-6.5-1.5z" fill="#1c5fb0"/><circle cx="10.5" cy="12" r="3" fill="#d4e2ea"/><path d="M12 14.5h10v1.5c-2 1-6 1-9-0.5z" fill="#d4e2ea"/></svg>
<svg class="a" style="left:158px;top:686px" width="21" height="19" viewBox="0 0 21 19"><rect width="21" height="19" rx="2.5" fill="#c8161d"/><path d="M4.5 15.5c1.5-1 3.5-4 5-8 0.8-2.5 0.8-4.5 0.2-4.5s-0.8 2 0 4.5c1 3 3.5 6 6.5 6.5 1.2 0.2 1.2-0.8 0-0.8-3 0-8 1-11 2.8-0.8 0.5-0.8 0 0-0.5z" fill="none" stroke="#fff" stroke-width="1.2"/></svg>
<svg class="a" style="left:202px;top:686px" width="22" height="20" viewBox="0 0 22 20"><rect x="5" y="0" width="17" height="20" rx="2" fill="#2b7cd3"/><rect x="5" y="10" width="17" height="10" rx="2" fill="#185abd"/><rect x="0" y="4" width="11" height="11" rx="1.5" fill="#185abd"/><text x="1.5" y="13" font-size="9" font-weight="bold" fill="#fff" font-family="Liberation Sans">W</text></svg>
<svg class="a" style="left:246px;top:686px" width="22" height="20" viewBox="0 0 22 20"><rect x="5" y="0" width="17" height="20" rx="2" fill="#21a366"/><rect x="5" y="10" width="17" height="10" rx="2" fill="#107c41"/><rect x="0" y="4" width="11" height="11" rx="1.5" fill="#107c41"/><text x="2.5" y="13" font-size="9" font-weight="bold" fill="#fff" font-family="Liberation Sans">X</text></svg>
<svg class="a" style="left:291px;top:686px" width="22" height="21" viewBox="0 0 22 21"><rect width="20" height="20" fill="#5b7f9e"/><g fill="#fff"><rect x="8" y="2" width="4" height="4"/><rect x="14" y="2" width="4" height="4"/><rect x="2" y="8" width="4" height="4"/><rect x="8" y="8" width="4" height="4"/><rect x="14" y="8" width="4" height="4"/><rect x="2" y="14" width="4" height="4"/><rect x="8" y="14" width="4" height="4"/></g><rect x="13" y="13" width="9" height="8" fill="#d9232e"/><text x="14" y="20" font-size="6" fill="#fff" font-family="Liberation Sans">16</text></svg>
<svg class="a" style="left:335px;top:687px" width="20" height="15" viewBox="0 0 20 15"><ellipse cx="7.5" cy="6" rx="7.5" ry="6" fill="#3fc44a"/><ellipse cx="14" cy="10" rx="6" ry="5" fill="#f2f2f2"/><circle cx="12" cy="10" r="0.8" fill="#888"/><circle cx="16" cy="10" r="0.8" fill="#888"/><circle cx="5" cy="5" r="0.9" fill="#1d7f2b"/><circle cx="9.5" cy="5" r="0.9" fill="#1d7f2b"/></svg>
<svg class="a" style="left:379px;top:685px" width="22" height="22" viewBox="0 0 22 22"><circle cx="11" cy="11" r="11" fill="#1f7fd8"/><rect x="6.5" y="3.5" width="9" height="15" rx="1.5" fill="#7ec0f5" stroke="#fff" stroke-width="1"/></svg>
<svg class="a" style="left:424px;top:686px" width="21" height="20" viewBox="0 0 21 20"><rect width="21" height="20" fill="#1677ff"/><path d="M3 13l4-5 3 3 3-4 5 6h-4l-1-1-2 2H8l-1-1-1 1z" fill="#fff"/></svg>
<svg class="a" style="left:467px;top:686px" width="23" height="20" viewBox="0 0 23 20"><circle cx="13" cy="10" r="10" fill="#ed6c47"/><path d="M13 0a10 10 0 0 1 10 10H13z" fill="#ff8f6b"/><path d="M13 10h10a10 10 0 0 1-10 10z" fill="#c43e1c"/><rect x="0" y="4" width="12" height="12" rx="1.5" fill="#c43e1c"/><text x="2.5" y="14" font-size="10" font-weight="bold" fill="#fff" font-family="Liberation Sans">P</text></svg>
<div class="a" style="left:912px;top:686px;width:1px;height:20px;background:#333"></div><div class="a" style="left:914px;top:686px;width:1px;height:20px;background:#333"></div>
<div class="a" style="left:921px;top:688px;font-size:11px;line-height:16px;color:#111">Allenlee</div>
<svg class="a" style="left:968px;top:681px" width="8" height="6" viewBox="0 0 8 6"><path d="M0.5 0.5L3 3 0.5 5.5 M4.5 0.5L7 3 4.5 5.5" fill="none" stroke="#4a5f80" stroke-width="1"/></svg>
<svg class="a" style="left:980px;top:688px" width="41" height="16" viewBox="0 0 41 16"><path d="M2.5 0.5v4 M6.5 0.5v4" stroke="#fff" stroke-width="1.6"/><path d="M0.5 4h8v3.5a4 4 0 0 1-8 0z" fill="#fff"/><path d="M4.5 11v5" stroke="#fff" stroke-width="1.8"/><rect x="11" y="1" width="26" height="14" fill="#1f8a4a" stroke="#fff" stroke-width="1.6"/><rect x="37.5" y="5" width="2.5" height="6" fill="#f0f0f0"/><text x="12.5" y="12.2" font-size="9.8" fill="#fff" font-family="Liberation Sans" letter-spacing="-0.4">100%</text></svg>
<svg class="a" style="left:1025px;top:692px" width="10" height="6"><path d="M0.5 5.5L5 1l4.5 4.5" fill="none" stroke="#111" stroke-width="1.2"/></svg>
<svg class="a" style="left:1046px;top:688px" width="8" height="16" viewBox="0 0 8 16"><rect x="1.5" y="0" width="5" height="10" rx="2.5" fill="#111"/><path d="M0.5 7a3.5 3.5 0 0 0 7 0 M4 11v4 M1.5 15.5h5" fill="none" stroke="#111"/></svg>
<svg class="a" style="left:1063px;top:690px" width="13" height="14" viewBox="0 0 13 14"><ellipse cx="6.5" cy="5" rx="4.2" ry="5" fill="#111"/><ellipse cx="6.5" cy="9.5" rx="4.8" ry="4.2" fill="#111"/><ellipse cx="6.5" cy="10" rx="3.3" ry="3.3" fill="#fff"/><path d="M2 7.5h9l-1 2.5H3z" fill="#e02020"/><path d="M1 13.5h4 M8 13.5h4" stroke="#f0a020" stroke-width="1.2"/></svg>
<svg class="a" style="left:1083px;top:690px" width="14" height="11" viewBox="0 0 14 11"><path d="M0.5 0v3" stroke="#111" stroke-width="1.2"/><rect x="1" y="2.5" width="12.5" height="8" fill="none" stroke="#111" stroke-width="1.2"/><rect x="2.5" y="4" width="9.5" height="5" fill="#111"/></svg>
<svg class="a" style="left:1102px;top:689px" width="15" height="14" viewBox="0 0 15 14"><path d="M1 13a12 12 0 0 1 12-12 M3.5 13a9.5 9.5 0 0 1 9.5-9.5 M6 13a7 7 0 0 1 7-7 M8.5 13a4.5 4.5 0 0 1 4.5-4.5" fill="none" stroke="#333" stroke-width="1"/><path d="M3 3l4 4" stroke="#333"/></svg>
<svg class="a" style="left:1122px;top:689px" width="15" height="14" viewBox="0 0 15 14"><path d="M0.5 4.5h3l4-4v13l-4-4h-3z" fill="none" stroke="#111"/><path d="M10 4a4 4 0 0 1 0 6 M12 2a7 7 0 0 1 0 10" fill="none" stroke="#111"/></svg>
<div class="a" style="left:1141px;top:687px;font-size:15px;line-height:18px;color:#111">中</div>
<div class="a" style="left:1177px;top:682px;font-size:11px;line-height:15px;color:#111">14:52</div>
<div class="a" style="left:1162px;top:697px;font-size:11.2px;line-height:15px;color:#111">2020/10/11</div>
<svg class="a" style="left:1232px;top:689px" width="15" height="15" viewBox="0 0 15 15"><path d="M0.5 0.5h14v11h-7l-3 3v-3h-4z" fill="none" stroke="#111"/></svg>
</body></html>
